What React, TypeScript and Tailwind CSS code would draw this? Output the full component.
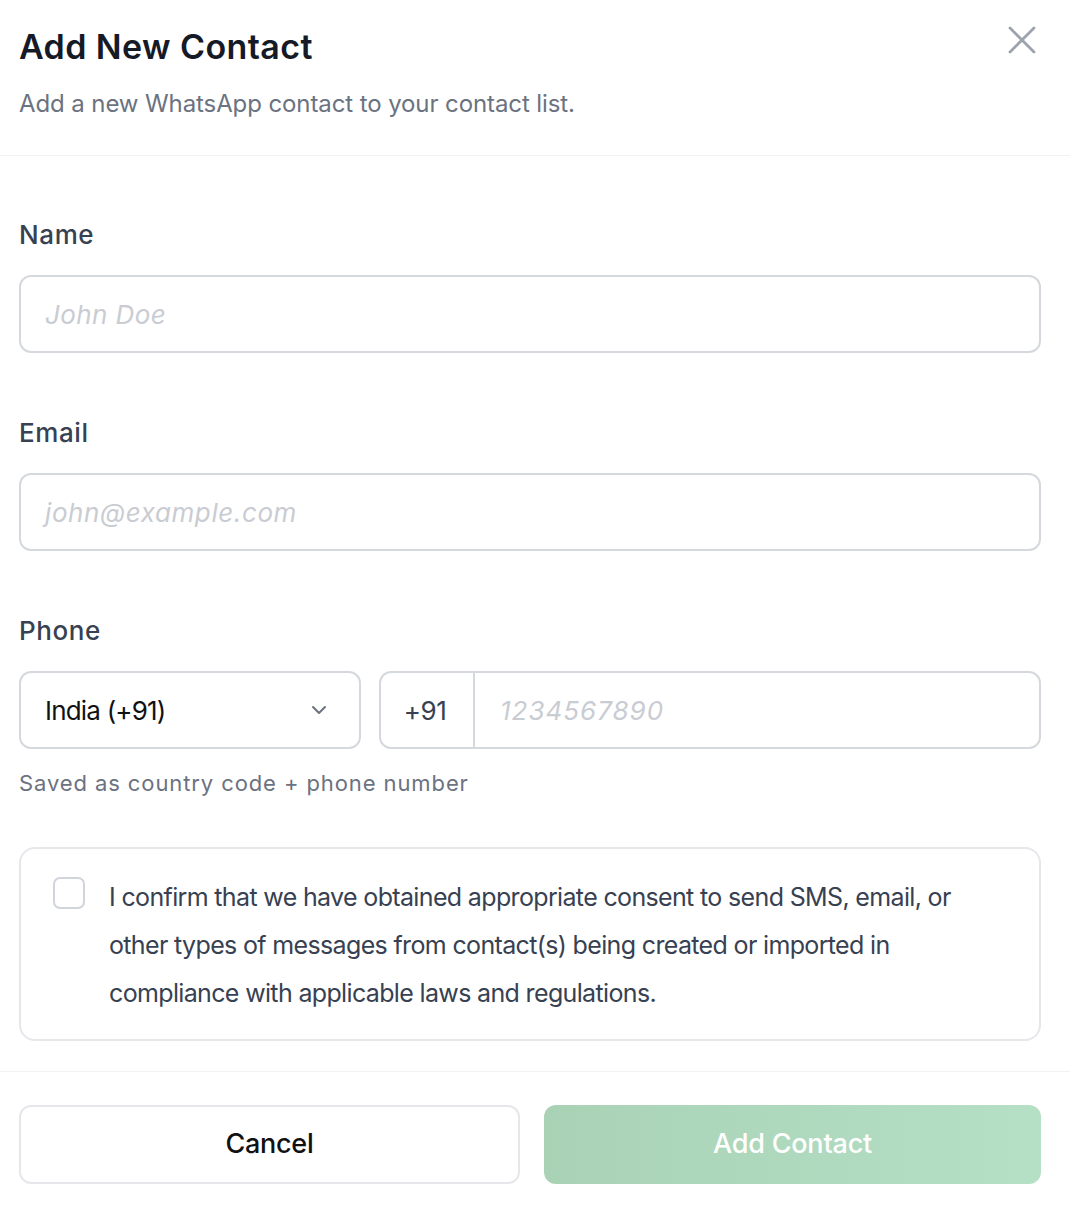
import { X, ChevronDown } from "lucide-react";

export default function App() {
  const font = "font-['Inter','Noto_Sans',sans-serif]";
  return (
    <div className={`w-[1070px] h-[1208px] bg-white ${font} antialiased`}>
      {/* header */}
      <div className="relative pl-[19px] pr-[29px] pt-[27px] pb-[35px] border-b border-[#f1f2f4]">
        <h1 className="text-[34px] leading-[40px] font-semibold text-[#161a26] tracking-[0.4px]">
          Add New Contact
        </h1>
        <p className="mt-[21px] text-[24px] leading-[32px] text-[#6b7280] tracking-[-0.1px]">
          Add a new WhatsApp contact to your contact list.
        </p>
        <button className="absolute right-[24px] top-[16px] text-[#9ca3af]">
          <X className="w-[48px] h-[48px]" strokeWidth={1.4} />
        </button>
      </div>

      {/* body */}
      <div className="pl-[19px] pr-[29px] pt-[63px] pb-[30px] border-b border-[#f1f2f4]">
        <label className="block text-[26px] leading-[32px] font-medium text-[#374151] tracking-[0.6px]">Name</label>
        <div className="mt-[24px] h-[78px] rounded-[12px] border-2 border-[#d5d8dd] flex items-center px-[24px]">
          <span className="text-[26px] italic text-[#c9ccd2] tracking-[0.4px]">John Doe</span>
        </div>

        <label className="block mt-[64px] text-[26px] leading-[32px] font-medium text-[#374151] tracking-[0.6px]">Email</label>
        <div className="mt-[24px] h-[78px] rounded-[12px] border-2 border-[#d5d8dd] flex items-center px-[24px]">
          <span className="text-[26px] italic text-[#c9ccd2] tracking-[0.6px]">john@example.com</span>
        </div>

        <label className="block mt-[64px] text-[26px] leading-[32px] font-medium text-[#374151] tracking-[0.6px]">Phone</label>
        <div className="mt-[24px] flex gap-[18px]">
          <div className="w-[342px] h-[78px] rounded-[12px] border-2 border-[#d5d8dd] flex items-center justify-between pl-[24px] pr-[28px]">
            <span className="text-[26px] text-[#111111] tracking-[-0.8px]">India (+91)</span>
            <ChevronDown className="w-[24px] h-[24px] text-[#6b7280]" strokeWidth={2} />
          </div>
          <div className="flex-1 h-[78px] rounded-[12px] border-2 border-[#d5d8dd] flex items-stretch">
            <div className="w-[94px] flex items-center justify-center border-r-2 border-[#d5d8dd]">
              <span className="text-[26px] text-[#374151] tracking-[-0.4px] pr-[4px]">+91</span>
            </div>
            <div className="flex items-center pl-[25px]">
              <span className="text-[26px] italic text-[#c9ccd2] tracking-[1px]">1234567890</span>
            </div>
          </div>
        </div>
        <p className="mt-[20px] text-[22px] leading-[28px] text-[#6b7280] tracking-[0.9px]">
          Saved as country code + phone number
        </p>

        <div className="mt-[50px] rounded-[16px] border-2 border-[#e5e7eb] pl-[32px] pr-[24px] pt-[24px] pb-[22px] flex gap-[24px]">
          <div className="mt-[4px] w-[32px] h-[32px] shrink-0 rounded-[7px] border-2 border-[#d1d5db]" />
          <p className="max-w-[860px] text-[25px] leading-[48px] text-[#374151] tracking-[-0.65px]">
            I confirm that we have obtained appropriate consent to send SMS, email, or other types of messages from
            contact(s) being created or imported in compliance with applicable laws and regulations.
          </p>
        </div>
      </div>

      {/* footer */}
      <div className="pl-[19px] pr-[29px] pt-[33px] flex gap-[24px]">
        <button className="flex-1 h-[79px] rounded-[12px] border-2 border-[#e5e7eb] text-[27px] font-medium text-[#111111] tracking-[-0.3px]">
          Cancel
        </button>
        <button className="flex-1 h-[79px] rounded-[12px] bg-gradient-to-r from-[#a9d2b5] to-[#b5e0c6] text-[27px] font-medium text-white tracking-[-0.2px]">
          Add Contact
        </button>
      </div>
    </div>
  );
}
